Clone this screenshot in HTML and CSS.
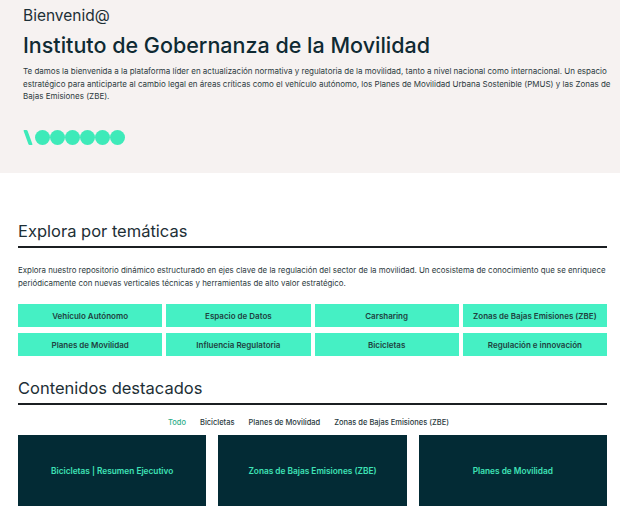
FILE: index.html
```html
<!DOCTYPE html>
<html lang="es">
<head>
<meta charset="utf-8">
<title>Instituto de Gobernanza de la Movilidad</title>
<link rel="stylesheet" href="styles.css">
</head>
<body>
<header class="hero">
  <div class="hero-inner">
    <p class="welcome">Bienvenid@</p>
    <h1 class="title">Instituto de Gobernanza de la Movilidad</h1>
    <p class="intro">Te damos la bienvenida a la plataforma líder en actualización normativa y regulatoria de la movilidad, tanto a nivel nacional como internacional. Un espacio estratégico para anticiparte al cambio legal en áreas críticas como el vehículo autónomo, los Planes de Movilidad Urbana Sostenible (PMUS) y las Zonas de Bajas Emisiones (ZBE).</p>
    <div class="dots">
      <span class="slash"></span>
      <span class="dot"></span><span class="dot"></span><span class="dot"></span><span class="dot"></span><span class="dot"></span><span class="dot"></span>
    </div>
  </div>
</header>
<main class="main">
  <section class="section">
    <h2 class="section-title">Explora por temáticas</h2>
    <p class="section-text">Explora nuestro repositorio dinámico estructurado en ejes clave de la regulación del sector de la movilidad. Un ecosistema de conocimiento que se enriquece periódicamente con nuevas verticales técnicas y herramientas de alto valor estratégico.</p>
    <div class="topics">
      <a class="topic">Vehículo Autónomo</a>
      <a class="topic">Espacio de Datos</a>
      <a class="topic">Carsharing</a>
      <a class="topic">Zonas de Bajas Emisiones (ZBE)</a>
      <a class="topic">Planes de Movilidad</a>
      <a class="topic">Influencia Regulatoria</a>
      <a class="topic">Bicicletas</a>
      <a class="topic">Regulación e innovación</a>
    </div>
  </section>
  <section class="section featured">
    <h2 class="section-title">Contenidos destacados</h2>
    <nav class="tabs">
      <span class="tab active">Todo</span>
      <span class="tab">Bicicletas</span>
      <span class="tab">Planes de Movilidad</span>
      <span class="tab">Zonas de Bajas Emisiones (ZBE)</span>
    </nav>
    <div class="cards">
      <div class="card">Bicicletas | Resumen Ejecutivo</div>
      <div class="card">Zonas de Bajas Emisiones (ZBE)</div>
      <div class="card">Planes de Movilidad</div>
    </div>
  </section>
</main>
</body>
</html>
```
FILE: styles.css
```css
* { box-sizing: border-box; }
html, body { margin: 0; padding: 0; }
body {
  font-family: Inter, "Noto Sans", sans-serif;
  color: #1c2f35;
  background: #ffffff;
}
.hero {
  background: #f6f2f1;
  height: 173px;
}
.hero-inner {
  padding: 7px 4px 0 23px;
}
.welcome {
  margin: 0;
  font-size: 15.5px;
  line-height: 18px;
  font-weight: 400;
  color: #1d2f36;
}
.title {
  margin: 7px 0 0;
  font-size: 21.5px;
  line-height: 26px;
  font-weight: 500;
  color: #0f2a33;
}
.intro {
  margin: 7px 0 0;
  font-size: 8px;
  line-height: 12.5px;
  color: #2c3a40;
}
.dots {
  display: flex;
  align-items: center;
  margin-top: 27px;
  height: 16px;
}
.slash {
  width: 4px;
  height: 15px;
  background: #3eeab9;
  transform: skewX(20deg);
  margin: 0 5px 0 3px;
  border-radius: 1px;
}
.dot {
  width: 15px;
  height: 15px;
  border-radius: 50%;
  background: #3eeab9;
}
.main {
  padding: 47px 13px 0 18px;
}
.section-title {
  margin: 0;
  font-size: 16.5px;
  line-height: 22px;
  font-weight: 400;
  color: #1d2f36;
  padding-bottom: 4px;
  border-bottom: 2px solid #1b1f22;
}
.section-text {
  margin: 16px 0 0;
  font-size: 7.9px;
  line-height: 12.5px;
  color: #2c3a40;
}
.topics {
  margin-top: 15px;
  display: grid;
  grid-template-columns: repeat(4, 1fr);
  gap: 6px 4px;
}
.topic {
  background: #45f0c4;
  height: 23px;
  display: flex;
  align-items: center;
  justify-content: center;
  font-size: 8px;
  font-weight: 600;
  color: #1f3f3f;
}
.featured {
  margin-top: 21px;
}
.tabs {
  display: flex;
  justify-content: center;
  gap: 14px;
  margin-top: 13px;
  font-size: 7.5px;
  line-height: 10px;
  font-weight: 500;
  color: #2a3a40;
  padding-right: 8px;
}
.tab.active { color: #2fae8a; }
.cards {
  margin-top: 7px;
  display: grid;
  grid-template-columns: repeat(3, 1fr);
  gap: 12px;
}
.card {
  background: #032b35;
  height: 71px;
  display: flex;
  align-items: center;
  justify-content: center;
  color: #3fe2b6;
  font-size: 8.3px;
  font-weight: 600;
}
```
